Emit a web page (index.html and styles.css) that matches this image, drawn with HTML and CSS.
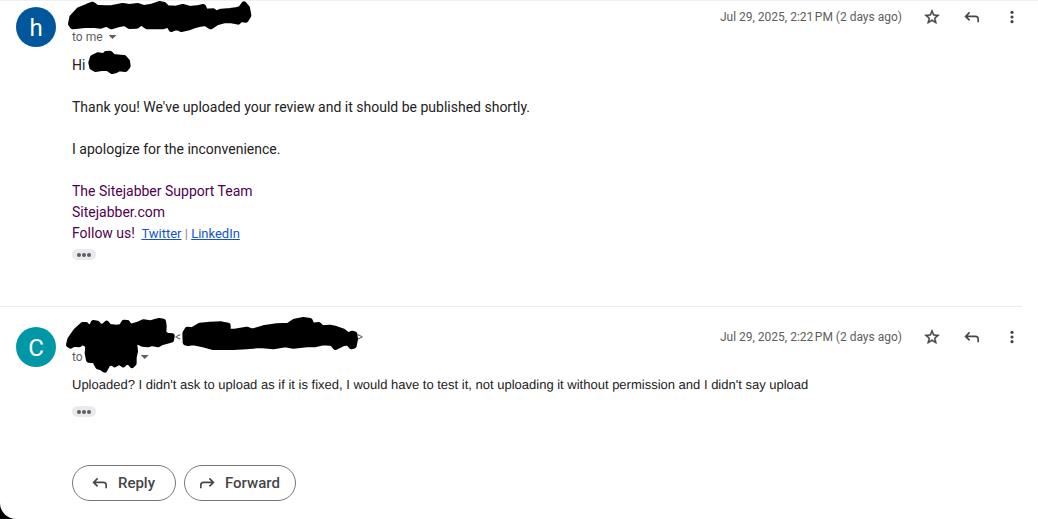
FILE: index.html
```
<!DOCTYPE html>
<html lang="en">
  <head>
    <meta charset="utf-8">
    <title>Conversation</title>
    <link rel="stylesheet" href="styles.css">
  </head>
  <body>
    <svg class="sprite">
      <symbol id="star" viewBox="0 0 24 24"><path d="M22 9.24l-7.19-.62L12 2 9.19 8.63 2 9.24l5.46 4.73L5.82 21 12 17.27 18.18 21l-1.63-7.03L22 9.24zM12 15.4l-3.76 2.27 1-4.28-3.32-2.88 4.38-.38L12 6.1l1.71 4.04 4.38.38-3.32 2.88 1 4.28L12 15.4z" stroke="currentColor" stroke-width=".6"/></symbol>
      <symbol id="reply" viewBox="0 0 20 20"><path d="M7.6 5.4L3.6 9.4L7.6 13.4M4 9.4H13.4Q16.2 9.4 16.2 12.2V15.3" fill="none" stroke="currentColor" stroke-width="1.6"/></symbol>
      <symbol id="forward" viewBox="0 0 20 20"><path d="M12.4 5.4L16.4 9.4L12.4 13.4M16 9.4H6.6Q3.8 9.4 3.8 12.2V15.3" fill="none" stroke="currentColor" stroke-width="1.6"/></symbol>
      <symbol id="more" viewBox="0 0 20 20"><circle cx="10" cy="5.3" r="1.6"/><circle cx="10" cy="10" r="1.6"/><circle cx="10" cy="14.7" r="1.6"/></symbol>
    </svg>

    <main class="thread">
      <article class="message">
        <div class="avatar blue">h</div>
        <div class="content">
          <header class="head">
            <div class="row">
              <span class="sender"></span>
              <time class="date">Jul 29, 2025, 2:21&#8239;PM (2 days ago)</time>
              <div class="tools">
                <button class="icon" aria-label="Star"><svg><use href="#star"/></svg></button>
                <button class="icon" aria-label="Reply"><svg><use href="#reply"/></svg></button>
                <button class="icon" aria-label="More"><svg><use href="#more"/></svg></button>
              </div>
            </div>
            <div class="to">to me <button class="caret" aria-label="Show details"></button></div>
            <svg class="ink ink-sender" viewBox="192 0 576 120"><path d="M212 72L216 52L236 30L262 19L278 13L290 22L312 24L330 24L368 17L388 20L414 17L432 23L452 20L478 11L492 14L502 24L528 25L548 20L570 26L590 24L610 20L616 34L640 33L648 40L664 34L690 32L708 30L722 26L732 12L742 24L746 46L738 60L722 58L714 66L694 62L672 62L650 68L632 80L616 70L602 72L580 78L564 84L544 88L530 82L514 88L506 74L488 80L464 79L442 80L424 68L410 78L388 79L374 70L354 74L334 80L320 72L302 78L278 75L254 76L234 78L218 80Z"/></svg>
          </header>
          <div class="body">
            <p>Hi <svg class="ink ink-name" viewBox="258 144 144 84"><path d="M273 188L278 172L294 165L312 168L318 161L330 160L340 170L362 172L372 173L382 184L384 198L376 208L356 206L346 212L336 214L322 204L304 205L286 208L276 202Z"/></svg></p>
            <p>Thank you! We've uploaded your review and it should be published shortly.</p>
            <p>I apologize for the inconvenience.</p>
            <p class="signature">The Sitejabber Support Team<br>Sitejabber.com<br>Follow us! <span class="social"><a href="#">Twitter</a> | <a href="#">LinkedIn</a></span></p>
          </div>
          <button class="trimmed" aria-label="Show trimmed content"><i></i><i></i><i></i></button>
        </div>
      </article>

      <article class="message">
        <div class="avatar teal">C</div>
        <div class="content">
          <header class="head">
            <div class="row">
              <span class="sender"><span class="address"><span>&lt;</span><span>&gt;</span></span></span>
              <time class="date">Jul 29, 2025, 2:22&#8239;PM (2 days ago)</time>
              <div class="tools">
                <button class="icon" aria-label="Star"><svg><use href="#star"/></svg></button>
                <button class="icon" aria-label="Reply"><svg><use href="#reply"/></svg></button>
                <button class="icon" aria-label="More"><svg><use href="#more"/></svg></button>
              </div>
            </div>
            <div class="to">to <span class="recipient"></span><button class="caret" aria-label="Show details"></button></div>
            <svg class="ink ink-long" viewBox="192 36 900 192"><path d="M206 134L210 118L228 92L248 74L258 74L264 82L276 78L280 68L292 70L300 80L312 78L320 70L328 80L350 82L364 80L372 67L382 68L390 80L412 74L430 66L450 69L466 65L478 62L490 64L492 78L491 98L500 106L516 108L514 120L498 124L484 128L474 134L456 130L444 134L428 132L410 124L404 134L406 154L402 172L402 190L396 196L388 186L376 188L370 194L358 186L344 194L336 188L324 192L314 210L306 204L294 200L284 182L266 180L262 160L264 136L246 126L238 134L222 132L212 138Z"/><path d="M556 128L555 100L562 88L576 90L600 76L630 73L664 72L684 76L684 92L704 94L740 88L756 94L790 84L830 78L866 76L884 64L910 59L930 62L936 76L956 74L966 84L990 82L1008 86L1030 94L1046 106L1056 100L1064 102L1066 118L1062 138L1054 140L1044 128L1026 132L1006 142L996 130L970 128L944 134L920 134L880 138L856 134L820 140L780 136L740 140L700 142L640 142L610 134L580 128L564 130Z"/></svg>
          </header>
          <div class="body plain">
            <p>Uploaded? I didn't ask to upload as if it is fixed, I would have to test it, not uploading it without permission and I didn't say upload</p>
          </div>
          <button class="trimmed" aria-label="Show trimmed content"><i></i><i></i><i></i></button>
          <div class="actions">
            <button class="pill"><svg><use href="#reply"/></svg>Reply</button>
            <button class="pill"><svg><use href="#forward"/></svg>Forward</button>
          </div>
        </div>
      </article>
    </main>
  </body>
</html>
```
FILE: styles.css
```
* { box-sizing: border-box; }

html { background: #000; }
body { margin: 0; font-family: Roboto, Arial, sans-serif; color: #222; }
p { margin: 0; }
button { border: none; background: none; padding: 0; font-family: inherit; color: inherit; cursor: pointer; }

.sprite { display: none; }

.thread { min-height: 100vh; background: #fff; border-top: 1px solid #f1f1f1; border-bottom-left-radius: 16px; padding-right: 16px; }

.message { display: flex; gap: 16px; padding: 6px 0 46px 16px; }
.message + .message { border-top: 1px solid #ececec; padding: 20px 0 18px 16px; }

.avatar { flex: none; width: 40px; height: 40px; border-radius: 50%; color: #fff; font-size: 24px; line-height: 42px; text-align: center; }
.blue { background: #01579b; }
.teal { background: #0097a7; }

.content { flex: 1; min-width: 0; }

.head { position: relative; color: #5e5e5e; font-size: 12px; line-height: 20px; }
.row { display: flex; align-items: center; height: 20px; }
.sender { flex: 1; }
.address { display: flex; justify-content: space-between; width: 188px; margin-left: 103px; }
.tools { display: flex; gap: 20px; margin-left: 20px; color: #444746; }
.icon { width: 20px; height: 20px; }
.icon svg { display: block; width: 20px; height: 20px; fill: currentColor; }
.icon:first-child svg { padding: 1px; }

.to { display: flex; align-items: center; height: 20px; }
.recipient { width: 55px; }
.caret { width: 8px; height: 4px; margin-left: 6px; background: #5e5e5e; clip-path: polygon(0 0, 100% 0, 50% 100%); }
.recipient + .caret { margin-left: 3px; }

.ink { fill: #000; stroke: #000; stroke-width: 16; stroke-linejoin: round; }
.ink-sender { position: absolute; left: -8px; top: -7px; width: 192px; height: 40px; }
.ink-long { position: absolute; left: -8px; top: -15px; width: 300px; height: 64px; }
.ink-name { position: absolute; left: 14px; top: -7px; width: 48px; height: 28px; }

.body { position: relative; margin-top: 8px; font-size: 14px; line-height: 21px; }
.body p + p { margin-top: 21px; }
.plain { font-family: "Liberation Sans", Arial, sans-serif; font-size: 13px; line-height: 20px; text-rendering: geometricPrecision; }
.signature { color: #500050; }
.social { margin-left: 3px; font-size: 13px; color: #888; }
.social a { color: #15c; }

.trimmed { display: flex; align-items: center; justify-content: center; gap: 1px; width: 24px; height: 11px; margin-top: 5px; border-radius: 6px; background: #e8eaed; }
.trimmed i { width: 4px; height: 4px; border-radius: 50%; background: #5e5e5e; }
.plain + .trimmed { margin-top: 11px; }

.actions { display: flex; gap: 8px; margin-top: 48px; }
.pill { display: flex; align-items: center; justify-content: center; gap: 8px; min-width: 104px; height: 36px; padding: 0 15px 0 12px; border: 1px solid #747775; border-radius: 18px; font-size: 15px; font-weight: 500; color: #444746; }
.pill svg { width: 20px; height: 20px; }
```
